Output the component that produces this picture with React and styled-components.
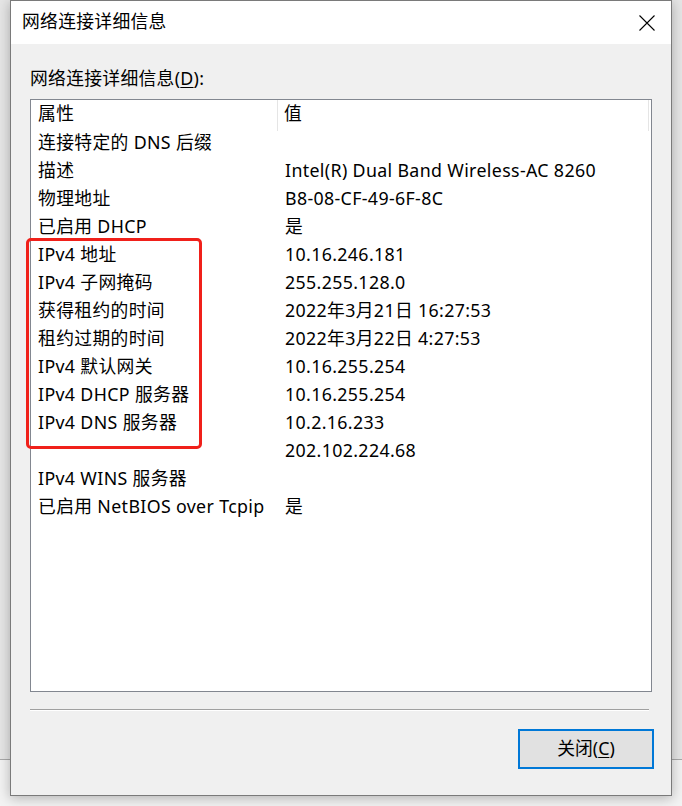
import React from "react";
import styled, { createGlobalStyle } from "styled-components";

const Global = createGlobalStyle`
  html, body { margin: 0; padding: 0; }
  body {
    width: 682px;
    height: 806px;
    overflow: hidden;
    font-family: "Noto Sans", "Noto Sans CJK SC", sans-serif;
  }
`;

const Desktop = styled.div`
  width: 682px;
  height: 806px;
  background: linear-gradient(to bottom, #e6e6e6 0, #e6e6e6 759px, #a9a9a9 759px, #a9a9a9 760px, #f3f3f3 760px);
  display: flex;
  align-items: flex-start;
  padding-left: 10px;
  box-sizing: border-box;
`;

const Dialog = styled.div`
  width: 662px;
  height: 796px;
  box-sizing: border-box;
  border: 1px solid #7a7a7a;
  background: #f0f0f0;
  box-shadow: 0 2px 12px rgba(0, 0, 0, 0.28);
  display: flex;
  flex-direction: column;
`;

const TitleBar = styled.div`
  height: 43px;
  background: #ffffff;
  display: flex;
  align-items: center;
  justify-content: space-between;
  padding: 0 16px 0 11px;
  flex-shrink: 0;
`;

const Title = styled.span`
  font-size: 17.8px;
  letter-spacing: 0.3px;
  color: #000;
  line-height: 1;
  margin-top: -1px;
`;

const CloseIcon = styled.svg`
  width: 16px;
  height: 16px;
  display: block;
`;

const Body = styled.div`
  flex: 1;
  display: flex;
  flex-direction: column;
  padding: 22px 19px 0 19px;
`;

const Label = styled.div`
  font-size: 17.8px;
  letter-spacing: 0.3px;
  color: #000;
  line-height: 24px;
  height: 24px;
  margin-bottom: 9px;
`;

const U = styled.span`
  text-decoration: underline;
  text-underline-offset: 2px;
  text-decoration-thickness: 1px;
`;

const ListBox = styled.div`
  position: relative;
  height: 593px;
  box-sizing: border-box;
  border: 1px solid #828790;
  background: #fff;
`;

const HeaderRow = styled.div`
  display: grid;
  grid-template-columns: 247px 371px 1fr;
  height: 31px;
`;

const HeaderCell = styled.div`
  font-size: 17.8px;
  letter-spacing: 0.35px;
  line-height: 27px;
  padding-bottom: 4px;
  color: #000;
  padding-left: ${(p) => p.$pad}px;
  border-right: ${(p) => (p.$sep ? "1px solid #e5e5e5" : "none")};
`;

const Row = styled.div`
  display: grid;
  grid-template-columns: 247px 1fr;
  height: 28px;
`;

const Cell = styled.div`
  font-size: 17.8px;
  letter-spacing: 0.35px;
  line-height: 22px;
  padding-bottom: 6px;
  color: #000;
  padding-left: ${(p) => p.$pad}px;
  white-space: nowrap;
`;

const Highlight = styled.div`
  position: absolute;
  left: -5px;
  top: 138px;
  width: 176px;
  height: 211px;
  box-sizing: border-box;
  border: 3.5px solid #f0201a;
  border-radius: 5px;
  pointer-events: none;
`;

const Separator = styled.div`
  height: 1px;
  width: 619px;
  background: #a0a0a0;
  border-bottom: 1px solid #ffffff;
  margin-top: 17px;
`;

const Footer = styled.div`
  display: flex;
  justify-content: flex-end;
  margin-top: 18px;
  margin-right: -2px;
`;

const Button = styled.button`
  width: 136px;
  height: 40px;
  box-sizing: border-box;
  border: 2px solid #0078d7;
  background: #e1e1e1;
  font-family: inherit;
  font-size: 17.8px;
  color: #000;
  padding: 0;
  display: flex;
  align-items: center;
  justify-content: center;
  line-height: 1;
`;

const rows = [
  ["连接特定的 DNS 后缀", ""],
  ["描述", "Intel(R) Dual Band Wireless-AC 8260"],
  ["物理地址", "B8-08-CF-49-6F-8C"],
  ["已启用 DHCP", "是"],
  ["IPv4 地址", "10.16.246.181"],
  ["IPv4 子网掩码", "255.255.128.0"],
  ["获得租约的时间", "2022年3月21日 16:27:53"],
  ["租约过期的时间", "2022年3月22日 4:27:53"],
  ["IPv4 默认网关", "10.16.255.254"],
  ["IPv4 DHCP 服务器", "10.16.255.254"],
  ["IPv4 DNS 服务器", "10.2.16.233"],
  ["", "202.102.224.68"],
  ["IPv4 WINS 服务器", ""],
  ["已启用 NetBIOS over Tcpip", "是"],
];

export default function App() {
  return (
    <>
      <Global />
      <Desktop>
        <Dialog>
          <TitleBar>
            <Title>网络连接详细信息</Title>
            <CloseIcon viewBox="0 0 16 16">
              <path d="M0.5 0.5 L15.5 15.5 M15.5 0.5 L0.5 15.5" stroke="#000" strokeWidth="1.1" fill="none" />
            </CloseIcon>
          </TitleBar>
          <Body>
            <Label>
              网络连接详细信息(<U>D</U>):
            </Label>
            <ListBox>
              <HeaderRow>
                <HeaderCell $pad={7} $sep>属性</HeaderCell>
                <HeaderCell $pad={6} $sep>值</HeaderCell>
                <HeaderCell $pad={0} />
              </HeaderRow>
              {rows.map(([k, v], i) => (
                <Row key={i}>
                  <Cell $pad={7}>{k}</Cell>
                  <Cell $pad={7}>{v}</Cell>
                </Row>
              ))}
              <Highlight />
            </ListBox>
            <Separator />
            <Footer>
              <Button>
                关闭(<U>C</U>)
              </Button>
            </Footer>
          </Body>
        </Dialog>
      </Desktop>
    </>
  );
}
